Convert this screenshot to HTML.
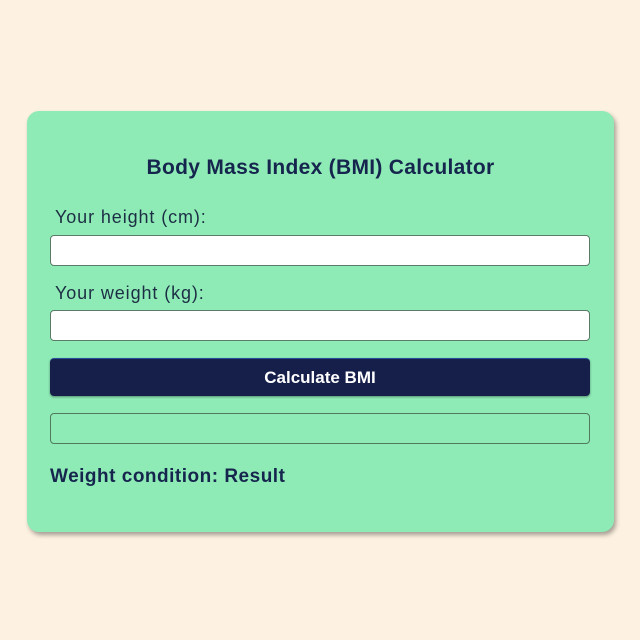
<!DOCTYPE html>
<html><head><style>
body{margin:0;width:640px;height:640px;background:#fdf1e1;font-family:"Liberation Sans",sans-serif;position:relative;overflow:hidden}
.card{position:absolute;left:27px;top:111px;width:587px;height:421px;background:#8eebb6;border-radius:12px;box-shadow:2px 3px 5px rgba(0,0,0,0.35)}
.t{position:absolute;left:0;width:100%;text-align:center;top:45px;font-size:21px;letter-spacing:0.3px;font-weight:bold;color:#15254d}
.l{position:absolute;left:28px;font-size:18px;letter-spacing:0.9px;color:#1c2e44}
.in{position:absolute;left:23px;width:538px;height:29px;background:#fff;border:1px solid #5c7a68;border-radius:4px}
.btn{position:absolute;left:23px;top:247px;width:540px;height:38px;background:#161f4a;border-radius:4px;color:#fff;font-weight:bold;font-size:17px;text-align:center;line-height:38px;box-shadow:0 1px 2px rgba(0,0,0,.4);border-top:1px solid #2a4a9a;box-sizing:border-box}
.r{position:absolute;left:23px;top:302px;width:538px;height:29px;border:1px solid #4f7a5e;border-radius:4px}
.w{position:absolute;left:23px;top:355px;font-size:19px;letter-spacing:0.5px;font-weight:bold;color:#15254d}
</style></head><body>
<div class="card">
<div class="t">Body Mass Index (BMI) Calculator</div>
<div class="l" style="top:96px">Your height (cm):</div>
<div class="in" style="top:124px"></div>
<div class="l" style="top:172px">Your weight (kg):</div>
<div class="in" style="top:199px"></div>
<div class="btn">Calculate BMI</div>
<div class="r"></div>
<div class="w">Weight condition: Result</div>
</div>
</body></html>
